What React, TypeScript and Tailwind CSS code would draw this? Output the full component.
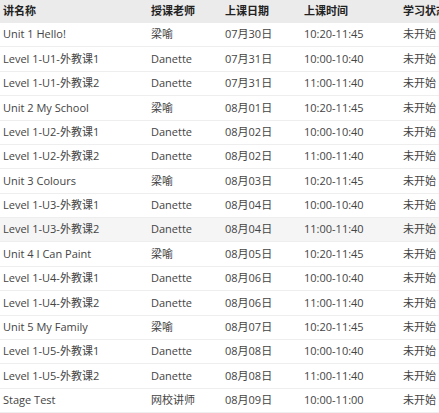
const rows = [
  ['Unit 1 Hello!', '梁喻', '07月30日', '10:20-11:45'],
  ['Level 1-U1-外教课1', 'Danette', '07月31日', '10:00-10:40'],
  ['Level 1-U1-外教课2', 'Danette', '07月31日', '11:00-11:40'],
  ['Unit 2 My School', '梁喻', '08月01日', '10:20-11:45'],
  ['Level 1-U2-外教课1', 'Danette', '08月02日', '10:00-10:40'],
  ['Level 1-U2-外教课2', 'Danette', '08月02日', '11:00-11:40'],
  ['Unit 3 Colours', '梁喻', '08月03日', '10:20-11:45'],
  ['Level 1-U3-外教课1', 'Danette', '08月04日', '10:00-10:40'],
  ['Level 1-U3-外教课2', 'Danette', '08月04日', '11:00-11:40'],
  ['Unit 4 I Can Paint', '梁喻', '08月05日', '10:20-11:45'],
  ['Level 1-U4-外教课1', 'Danette', '08月06日', '10:00-10:40'],
  ['Level 1-U4-外教课2', 'Danette', '08月06日', '11:00-11:40'],
  ['Unit 5 My Family', '梁喻', '08月07日', '10:20-11:45'],
  ['Level 1-U5-外教课1', 'Danette', '08月08日', '10:00-10:40'],
  ['Level 1-U5-外教课2', 'Danette', '08月08日', '11:00-11:40'],
  ['Stage Test', '网校讲师', '08月09日', '10:00-11:00'],
];

const cols = 'grid grid-cols-[148px_74px_79px_99px_90px] items-center pl-[3px]';

export default function App() {
  return (
    <div
      className="w-[439px] h-[413px] overflow-hidden bg-white text-[11px] text-[#444]"
      style={{ fontFamily: '"Open Sans", "Noto Sans CJK SC", sans-serif' }}
    >
      <div className="w-[500px]">
        <div className={`${cols} h-[23px] bg-[#ebebeb] font-bold text-[#222]`}>
          <div>讲名称</div>
          <div>授课老师</div>
          <div>上课日期</div>
          <div>上课时间</div>
          <div>学习状态</div>
        </div>
        {rows.map((r, i) => (
          <div
            key={i}
            className={`${cols} h-[24.375px] border-b border-[#eeeeee] ${i === 8 ? 'bg-[#f5f5f5]' : ''}`}
          >
            <div className="whitespace-nowrap">{r[0]}</div>
            <div>{r[1]}</div>
            <div>{r[2]}</div>
            <div>{r[3]}</div>
            <div>未开始</div>
          </div>
        ))}
      </div>
    </div>
  );
}
